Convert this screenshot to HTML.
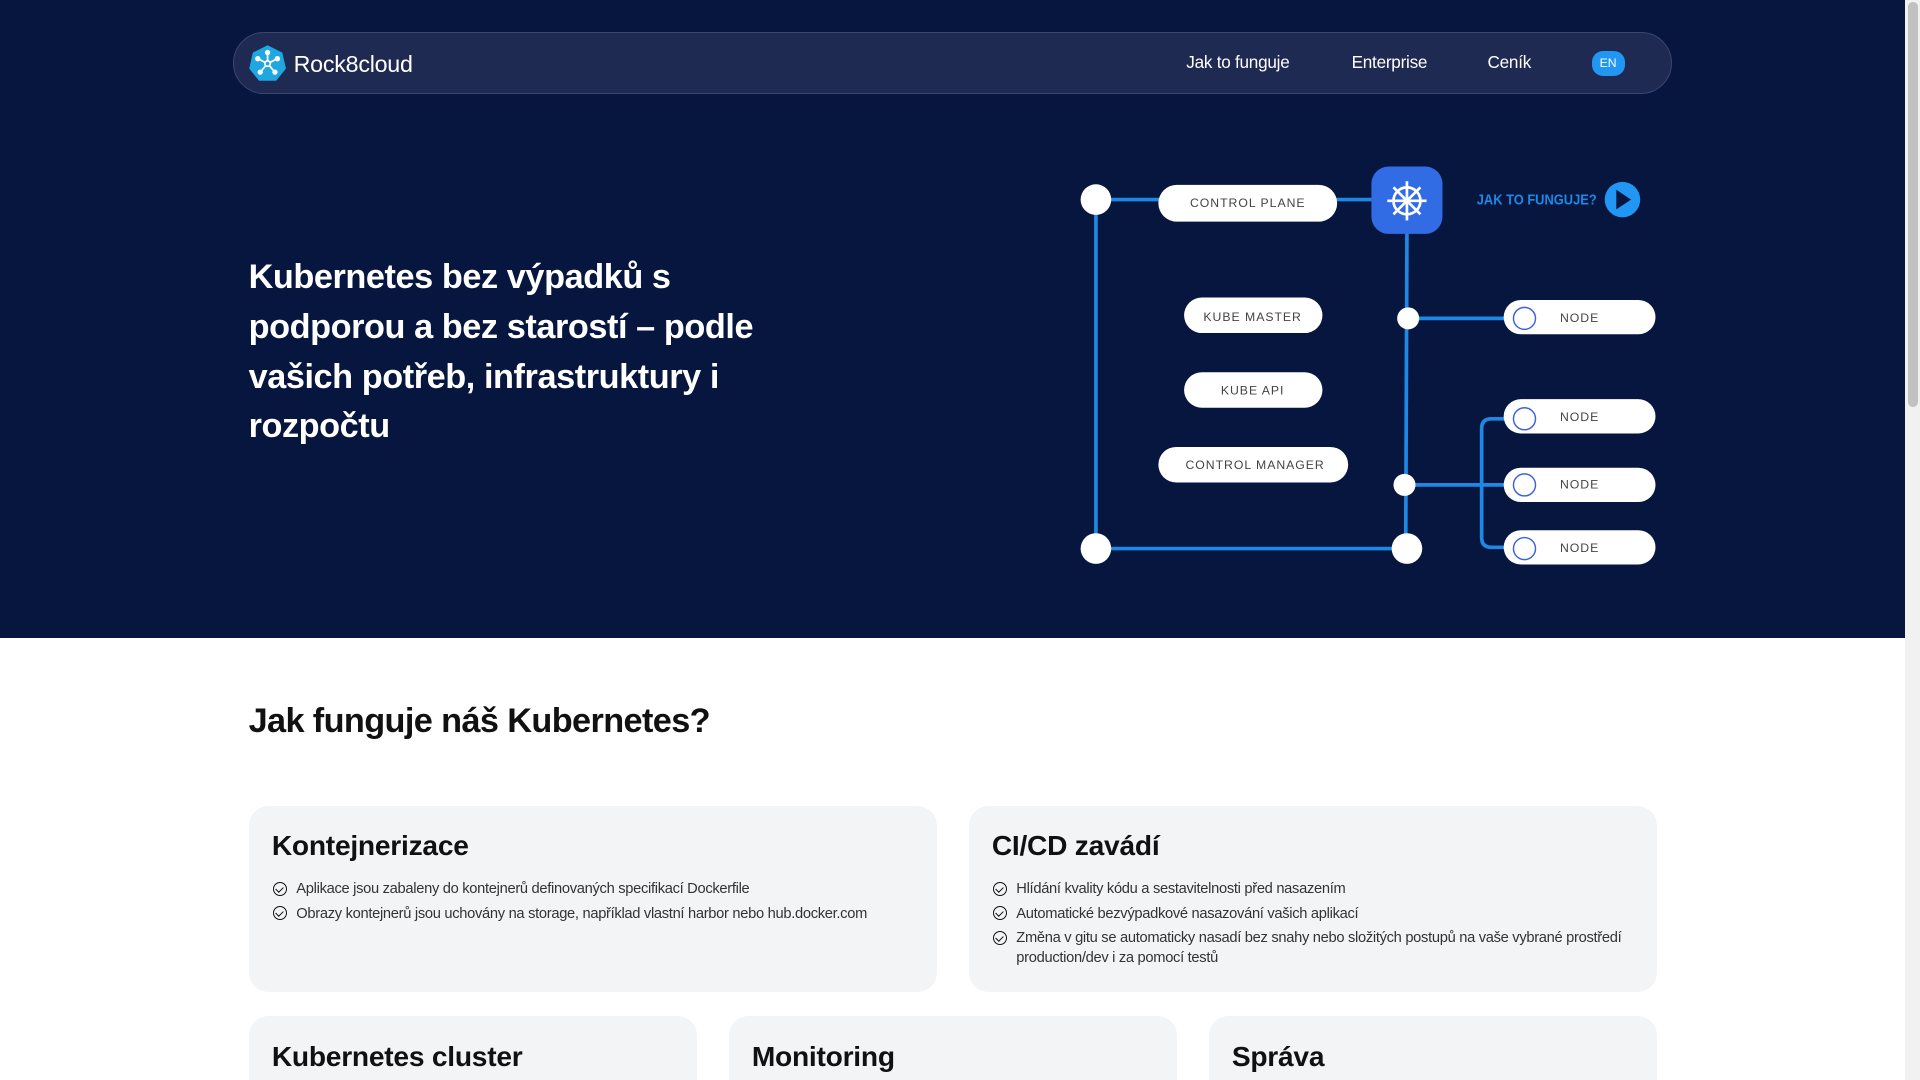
<!DOCTYPE html>
<html><head><meta charset="utf-8">
<style>
html,body{margin:0;padding:0;overflow:hidden;width:1920px;height:1080px;background:#fff}
#w{zoom:1.22449;width:1568px;height:882px;position:relative;font-family:"Liberation Sans",Roboto,sans-serif;overflow:hidden}
.hero{position:absolute;left:0;top:0;width:1556px;height:521px;background:#07163f}
.sb{position:absolute;left:1556px;top:0;width:12px;height:882px;background:#f1f1f1}
.sb div{position:absolute;left:2px;top:2px;width:8px;height:330px;background:#c1c1c1;border-radius:4px}
.nav{position:absolute;left:190px;top:26px;width:1174px;height:49px;border:1px solid #3b4670;border-radius:26px;background:#1e2a52}
.nav a{position:absolute;top:16px;color:#fff;font-size:14px;letter-spacing:-0.2px}
.h1{position:absolute;left:203px;top:207px;width:440px;color:#fff;font-weight:bold;font-size:28px;letter-spacing:-0.35px;line-height:40.5px}
.h2{position:absolute;left:203px;top:573px;font-weight:bold;font-size:28px;letter-spacing:-0.5px;color:#111}
.card{position:absolute;background:#f3f4f6;border-radius:16px}
.card h3{margin:0;position:absolute;left:19px;top:20px;font-size:23px;letter-spacing:-0.2px;color:#111}
.card ul{list-style:none;margin:0;padding:0;position:absolute;left:19px;top:61px;right:20px}
.card li{position:relative;padding-left:20px;font-size:12px;letter-spacing:-0.25px;color:#333;line-height:16px;margin-bottom:4px}
.card li:before{content:"";position:absolute;left:1px;top:1px;width:10px;height:10px;border:1.3px solid #111;border-radius:50%}
.card li:after{content:"";position:absolute;left:4.5px;top:3.5px;width:3px;height:5px;border:solid #111;border-width:0 1.5px 1.5px 0;transform:rotate(45deg)}
</style></head><body><div id="w">
<div class="hero"></div>
<div class="sb"><div></div></div>
<div class="nav">
<svg style="position:absolute;left:12px;top:9px" width="32" height="32" viewBox="0 0 32 32"><polygon points="16,1 28,7 31,20 23,30 9,30 1,20 4,7" fill="#1ea7e0"/><g stroke="#fff" stroke-width="1.4" fill="#fff"><line x1="16" y1="16" x2="16" y2="7"/><line x1="16" y1="16" x2="8" y2="12"/><line x1="16" y1="16" x2="24" y2="12"/><line x1="16" y1="16" x2="10" y2="23"/><line x1="16" y1="16" x2="22" y2="23"/><circle cx="16" cy="7" r="1.5"/><circle cx="8" cy="12" r="1.5"/><circle cx="24" cy="12" r="1.5"/><circle cx="10" cy="23" r="1.5"/><circle cx="22" cy="23" r="1.5"/><circle cx="16" cy="16" r="2.2" fill="#1ea7e0"/></g></svg>
<span style="position:absolute;left:49px;top:15px;color:#fff;font-size:19px;letter-spacing:-0.2px">Rock8cloud</span>
<a style="left:778px">Jak to funguje</a><a style="left:913px">Enterprise</a><a style="left:1024px">Ceník</a>
<span style="position:absolute;left:1109px;top:15px;width:27px;height:20px;border-radius:9px;background:#2196f3;color:#fff;font-size:10px;text-align:center;line-height:20px">EN</span>
</div>
<div class="h1">Kubernetes bez výpadků s podporou a bez starostí – podle vašich potřeb, infrastruktury i rozpočtu</div>
<svg style="position:absolute;left:0;top:0" width="1568" height="521" font-family="Liberation Sans,sans-serif">
<g stroke="#1e88e5" stroke-width="3" fill="none">
<line x1="895" y1="163" x2="1120" y2="163"/><line x1="895" y1="163" x2="895" y2="448"/><line x1="895" y1="448" x2="1149" y2="448"/><line x1="1149" y1="190" x2="1148" y2="448"/><line x1="1150" y1="260" x2="1240" y2="260"/><line x1="1147" y1="396" x2="1240" y2="396"/>
<path d="M1240 342 H1218 Q1210 342 1210 350 V439 Q1210 447 1218 447 H1240"/>
</g>
<g fill="#fff"><circle cx="895" cy="163" r="12.5"/><circle cx="895" cy="448" r="12.5"/><circle cx="1149" cy="448" r="12.5"/><circle cx="1150" cy="260" r="9"/><circle cx="1147" cy="396" r="9"/>
<rect x="946" y="151" width="146" height="30" rx="15"/><rect x="967" y="243" width="113" height="29" rx="14.5"/><rect x="967" y="304" width="113" height="29" rx="14.5"/><rect x="946" y="365" width="155" height="29" rx="14.5"/>
<rect x="1228" y="245" width="124" height="28" rx="14"/><rect x="1228" y="326" width="124" height="28" rx="14"/><rect x="1228" y="382" width="124" height="28" rx="14"/><rect x="1228" y="433" width="124" height="28" rx="14"/></g>
<g fill="#fff" stroke="#3e63dd" stroke-width="1.2"><circle cx="1245" cy="260" r="9"/><circle cx="1245" cy="342" r="9"/><circle cx="1245" cy="396" r="9"/><circle cx="1245" cy="448" r="9"/></g>
<g fill="#444" font-size="10" letter-spacing="0.8" text-anchor="middle"><text x="1019" y="169">CONTROL PLANE</text><text x="1023" y="262">KUBE MASTER</text><text x="1023" y="322">KUBE API</text><text x="1025" y="383">CONTROL MANAGER</text><text x="1290" y="263">NODE</text><text x="1290" y="344">NODE</text><text x="1290" y="399">NODE</text><text x="1290" y="451">NODE</text></g>
<rect x="1120" y="136" width="58" height="55" rx="14" fill="#326ce5"/>
<g stroke="#fff" stroke-width="2.2" fill="none"><circle cx="1149" cy="164" r="11"/><line x1="1149" y1="148" x2="1149" y2="180"/><line x1="1133" y1="164" x2="1165" y2="164"/><line x1="1138" y1="153" x2="1160" y2="175"/><line x1="1160" y1="153" x2="1138" y2="175"/></g><circle cx="1149" cy="164" r="3" fill="#fff"/>
<text x="1206" y="167" fill="#1e88e5" font-weight="bold" font-size="12" textLength="98" lengthAdjust="spacingAndGlyphs">JAK TO FUNGUJE?</text>
<circle cx="1325" cy="163" r="14.5" fill="#2196f3"/><path d="M1320 155 L1332 163 L1320 171Z" fill="#07163f"/>
</svg>
<div class="h2">Jak funguje náš Kubernetes?</div>
<div class="card" style="left:203px;top:658px;width:562px;height:152px"><h3>Kontejnerizace</h3><ul><li>Aplikace jsou zabaleny do kontejnerů definovaných specifikací Dockerfile</li><li>Obrazy kontejnerů jsou uchovány na storage, například vlastní harbor nebo hub.docker.com</li></ul></div>
<div class="card" style="left:791px;top:658px;width:562px;height:152px"><h3>CI/CD zavádí</h3><ul><li>Hlídání kvality kódu a sestavitelnosti před nasazením</li><li>Automatické bezvýpadkové nasazování vašich aplikací</li><li>Změna v gitu se automaticky nasadí bez snahy nebo složitých postupů na vaše vybrané prostředí production/dev i za pomocí testů</li></ul></div>
<div class="card" style="left:203px;top:830px;width:366px;height:80px"><h3>Kubernetes cluster</h3></div>
<div class="card" style="left:595px;top:830px;width:366px;height:80px"><h3>Monitoring</h3></div>
<div class="card" style="left:987px;top:830px;width:366px;height:80px"><h3>Správa</h3></div>
</div></body></html>
